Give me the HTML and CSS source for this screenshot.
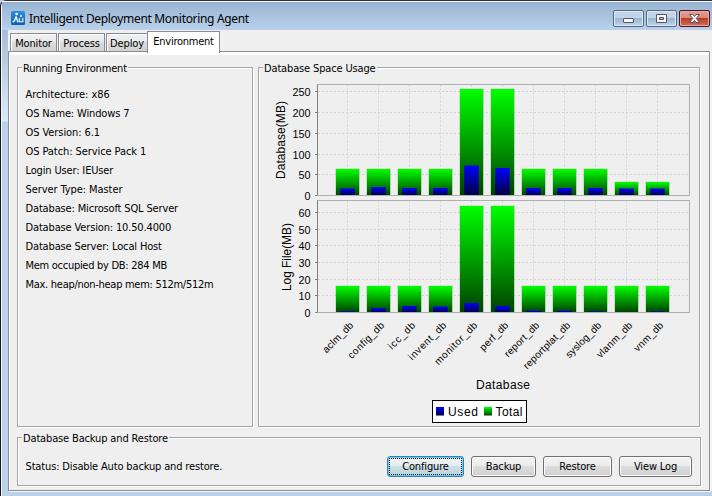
FILE: index.html
```
<!DOCTYPE html>
<html lang="en">
<head>
<meta charset="utf-8">
<title>Intelligent Deployment Monitoring Agent</title>
<link rel="stylesheet" href="styles.css">
</head>
<body>
<div class="window">
  <header class="titlebar">
    <svg class="app-icon" width="14" height="14" viewBox="0 0 14 14">
      <defs><linearGradient id="ic" x1="0" y1="0" x2="0" y2="1"><stop offset="0" stop-color="#2f8fd8"/><stop offset="1" stop-color="#0b62b4"/></linearGradient></defs>
      <rect width="14" height="14" rx="1.5" fill="url(#ic)"/>
      <circle cx="5.600" cy="3" r="1.300" fill="#fff"/>
      <path d="M1.600 11.300C3.800 10 4.600 8 5.200 5.500 5.600 8 6 9.500 7.200 11.300" fill="none" stroke="#fff" stroke-width="1.300"/>
      <circle cx="10" cy="5" r="1" fill="#fff"/>
      <path d="M8.300 7v4M8.300 10.700h3.500V7" fill="none" stroke="#fff" stroke-width="1.100"/>
    </svg>
    <h1 class="title">Intelligent Deployment Monitoring Agent</h1>
    <div class="controls">
      <span class="ctl"><svg width="29" height="15"><rect x="9.5" y="7.5" width="10" height="4" rx=".5" fill="#f8f8f8" stroke="#535666"/></svg></span>
      <span class="ctl"><svg width="29" height="15"><path d="M9.5 3.5h10v8h-10zM12.5 6.5v2h4v-2z" fill="#f8f8f8" fill-rule="evenodd" stroke="#535666"/></svg></span>
      <span class="ctl close"><svg width="29" height="15"><path d="M9.5 3.5h3.5l1.5 2 1.5-2h3.500l-3.200 4 3.200 4H16l-1.500-2-1.500 2H9.500l3.200-4z" fill="#f8f8f8" stroke="#535666"/></svg></span>
    </div>
  </header>
  <nav class="tabs">
    <span class="tab t1">Monitor</span><span class="tab t2">Process</span><span class="tab t3">Deploy</span><span class="tab active">Environment</span>
  </nav>
  <main class="panel">
    <div class="columns">
      <section class="group env">
        <h2>Running Environment</h2>
        <ul>
          <li class="wide">Architecture: x86</li>
          <li>OS Name: Windows 7</li>
          <li class="wide">OS Version: 6.1</li>
          <li class="wide">OS Patch: Service Pack 1</li>
          <li>Login User: IEUser</li>
          <li class="wide">Server Type: Master</li>
          <li>Database: Microsoft SQL Server</li>
          <li>Database Version: 10.50.4000</li>
          <li>Database Server: Local Host</li>
          <li class="tight">Mem occupied by DB: 284 MB</li>
          <li class="tight">Max. heap/non-heap mem: 512m/512m</li>
        </ul>
      </section>
      <section class="group usage">
        <h2>Database Space Usage</h2>
        <svg id="chart" class="chart" width="430" height="350" viewBox="264 75 430 350">
          <defs>
            <linearGradient id="g" x1="0" y1="0" x2="0" y2="1"><stop offset="0" stop-color="#0f0"/><stop offset="1" stop-color="#004000"/></linearGradient>
            <linearGradient id="b" x1="0" y1="0" x2="0" y2="1"><stop offset="0" stop-color="#00f"/><stop offset="1" stop-color="#000040"/></linearGradient>
          </defs>
        </svg>
      </section>
    </div>
    <section class="group backup">
      <h2>Database Backup and Restore</h2>
      <p>Status: Disable Auto backup and restore.</p>
      <div class="actions">
        <button class="focus">Configure</button><button class="b2">Backup</button><button class="b3">Restore</button><button class="b4">View Log</button>
      </div>
    </section>
  </main>
</div>
<script src="chart.js"></script>
</body>
</html>
```
FILE: styles.css
```
* { box-sizing: border-box; }
body { margin: 0; width: 712px; height: 496px; overflow: hidden; background: #b9d1ea; font: 11px/14px "DejaVu Sans Condensed", "DejaVu Sans", sans-serif; font-stretch: condensed; color: #000; letter-spacing: -0.15px; }
h1, h2, p, ul { margin: 0; padding: 0; font-size: inherit; font-weight: normal; }
ul { list-style: none; }
.window { height: 496px; padding: 0 0 5px 6px; border-top: 1px solid #2f3038; border-left: 1px solid #15171c; border-top-left-radius: 6px; box-shadow: inset 1px 1px 0 #f4f8fc; background: linear-gradient(#9ab4d2, #a6c0dd 30px, #dde8f5 119px, #b9d1ea 120px) 1px 1px no-repeat; display: flex; flex-direction: column; }
.titlebar { height: 29px; margin: 0 0 0 -5px; padding: 9px 2px 0 9px; display: flex; background: linear-gradient(#f4f8fc 1px, #99b4d2 1px, #b9d1ea 29px); }
.app-icon { margin: 1px 4px 0 0; }
.title { font: 12px/17px "Noto Sans", sans-serif; letter-spacing: -0.33px; white-space: nowrap; }
.controls { margin-left: auto; display: flex; gap: 2px; }
.ctl { width: 31px; height: 17px; border: 1px solid #576982; border-radius: 2px; background: linear-gradient(#c1d4e8 0 48%, #9bb5d2 50%, #bfd6ee); box-shadow: inset 0 0 0 1px #dce8f4; }
.ctl svg { display: block; }
.close { border-color: #471525; background: linear-gradient(#e5a496, #d98675 48%, #bd3c24 50%, #cc705c); box-shadow: inset 0 0 0 1px #e8aaa0; }
.tabs { height: 21px; margin-left: 1px; padding: 3px 0 0 2px; display: flex; background: #efefef; white-space: nowrap; }
.tab { height: 18px; border: 1px solid #898c95; border-bottom: 0; background: linear-gradient(#f3f3f3, #e8e8e8 48%, #dcdcdc 50%, #d1d1d1); box-shadow: inset 1px 1px #fff; text-align: center; line-height: 19px; margin-right: 1px; }
.t1 { width: 47px; } .t2 { width: 47px; } .t3 { width: 42px; margin-right: 0; }
.tab.active { position: relative; z-index: 1; margin: -2px 0 0 -1px; width: 73px; height: 22px; background: #fff; line-height: 19px; letter-spacing: -0.25px; }
.panel { flex: 1; margin: 0 2px 0 1px; padding: 15px 8px 4px; border: 1px solid #898c95; background: #efefef; box-shadow: inset 1px 3px #fff, 1px 1px #f7f7f7, 4px 0 #efefef; display: flex; flex-direction: column; gap: 10px; }
.columns { display: flex; gap: 5px; height: 360px; flex: none; }
.group { position: relative; border: 1px solid #a5a5a5; box-shadow: 1px 1px #fff, inset 1px 1px #fff; }
.group h2 { position: absolute; left: 4px; top: -6px; padding: 0 1px; background: #efefef; white-space: nowrap; line-height: 14px; }
.env { width: 236px; }
.env ul { padding: 17px 0 0 7.5px; }
.env li { height: 19px; line-height: 19px; white-space: nowrap; }
.env .wide { letter-spacing: -0.08px; }
.env .tight { letter-spacing: -0.28px; }
.usage { width: 442px; }
.chart { display: block; margin: 7px 0 0 5px; }
.backup { height: 49px; width: 684px; display: flex; justify-content: space-between; padding: 0 8px 0 7.5px; }
.backup p { line-height: 15px; margin-top: 21px; }
.actions { display: flex; gap: 7px; padding-top: 18px; }
button { width: 65px; height: 21px; margin: 0; padding: 0; border: 1px solid #707070; border-radius: 3px; background: linear-gradient(#f2f2f2, #ebebeb 49%, #dddddd 50%, #cfcfcf); box-shadow: inset 0 0 0 1px #fbfbfb; font: inherit; letter-spacing: inherit; color: #000; }
.focus { width: 77px; border-color: #3c7fb1; box-shadow: inset 0 0 0 1px #5fcdf0; background: linear-gradient(#eef3f5, #e2ecf0 49%, #cddfe6 50%, #bdd2da); outline: 1px dotted #000; outline-offset: -3px; }
.b3 { width: 69px; } .b4 { width: 73px; }
.chart text { font-family: "Liberation Sans", sans-serif; fill: #000; letter-spacing: 0; }
.tick { font-size: 11px; text-anchor: end; }
.cat { font-size: 10px; text-anchor: end; }
.axis { font-size: 12px; }
.grid { stroke: #d4d4d4; stroke-dasharray: 2 2; stroke-width: 1; }
.frame { fill: none; stroke: #b0b0b0; }
.line { stroke: #808080; }
```
FILE: chart.js
```
const svg = document.getElementById('chart');
function add(name, attrs, text) {
  const el = document.createElementNS('http://www.w3.org/2000/svg', name);
  for (const k in attrs) el.setAttribute(k, attrs[k]);
  if (text) el.textContent = text;
  svg.appendChild(el);
}
// name, label length, total top, used top (database); total top, used top (log file)
const dbs = [
  ['aclm_db', 39, 169, 188.5, 286, 311.3],
  ['config_db', 47, 169, 187, 286, 308],
  ['icc_db', 34, 169, 188, 286, 306],
  ['invent_db', 49, 169, 188, 286, 306.5],
  ['monitor_db', 56, 89, 165.5, 206, 303],
  ['perf_db', 36, 89, 168, 206, 306],
  ['report_db', 45, 169, 188, 286, 310.5],
  ['reportplat_db', 62, 169, 188, 286, 310.5],
  ['syslog_db', 46, 169, 188, 286, 311.3],
  ['vlanm_db', 46, 182, 188.5, 286, 312],
  ['vnm_db', 37, 182, 188.5, 286, 311.3]
];
const plots = [
  { top: 84.5, bottom: 195.5, ticks: [[250, 91.5], [200, 112.5], [150, 133.5], [100, 154.5], [50, 174.5], [0, 195.5]], col: 2 },
  { top: 200.5, bottom: 312.5, ticks: [[60, 212.5], [50, 229.5], [40, 245.5], [30, 262.5], [20, 279.5], [10, 295.5], [0, 312.5]], col: 4 }
];
for (const p of plots) {
  for (const [v, y] of p.ticks) {
    if (v) add('path', { class: 'grid', d: `M318 ${y}H689` });
    add('path', { class: 'line', d: `M315 ${y}h2` });
    add('text', { class: 'tick', x: 310.5, y: y + 4.5, textLength: String(v).length * 6, lengthAdjust: 'spacingAndGlyphs' }, String(v));
  }
  dbs.forEach((d, i) => add('path', { class: 'grid', d: `M${347.5 + 31 * i} ${p.top}V${p.bottom}` }));
  add('rect', { class: 'frame', x: 317.5, y: p.top, width: 372, height: p.bottom - p.top });
  dbs.forEach((d, i) => {
    const t = d[p.col], u = d[p.col + 1], x = 336 + 31 * i;
    add('rect', { x: x - 0.4, y: t - 0.3, width: 24, height: p.bottom - t + 0.3, fill: '#80d080' });
    add('rect', { x, y: t, width: 23, height: p.bottom - t, fill: 'url(#g)' });
    add('rect', { x: x + 4.2, y: u, width: 14.5, height: p.bottom - u, fill: 'url(#b)' });
  });
  add('path', { class: 'line', d: `M317.5 ${p.top}V${p.bottom}` });
  add('path', { class: 'frame', d: `M317.5 ${p.bottom}H690` });
}
dbs.forEach((d, i) => add('text', { class: 'cat', transform: `translate(${354 + 31 * i} 326) rotate(-45)`, textLength: d[1] }, d[0]));
add('text', { class: 'axis', transform: 'translate(285 179) rotate(-90)', textLength: 78 }, 'Database(MB)');
add('text', { class: 'axis', transform: 'translate(291 291) rotate(-90)', textLength: 68 }, 'Log File(MB)');
add('text', { class: 'axis', x: 476, y: 389, textLength: 54 }, 'Database');
add('rect', { x: 432.5, y: 400.5, width: 94, height: 22, fill: '#fff', stroke: '#000' });
add('rect', { x: 436, y: 407, width: 8, height: 8.5, fill: 'url(#b)' });
add('text', { class: 'axis', x: 448, y: 416, textLength: 30 }, 'Used');
add('rect', { x: 484, y: 407, width: 8, height: 8.5, fill: 'url(#g)' });
add('text', { class: 'axis', x: 495.5, y: 416, textLength: 27 }, 'Total');
```
